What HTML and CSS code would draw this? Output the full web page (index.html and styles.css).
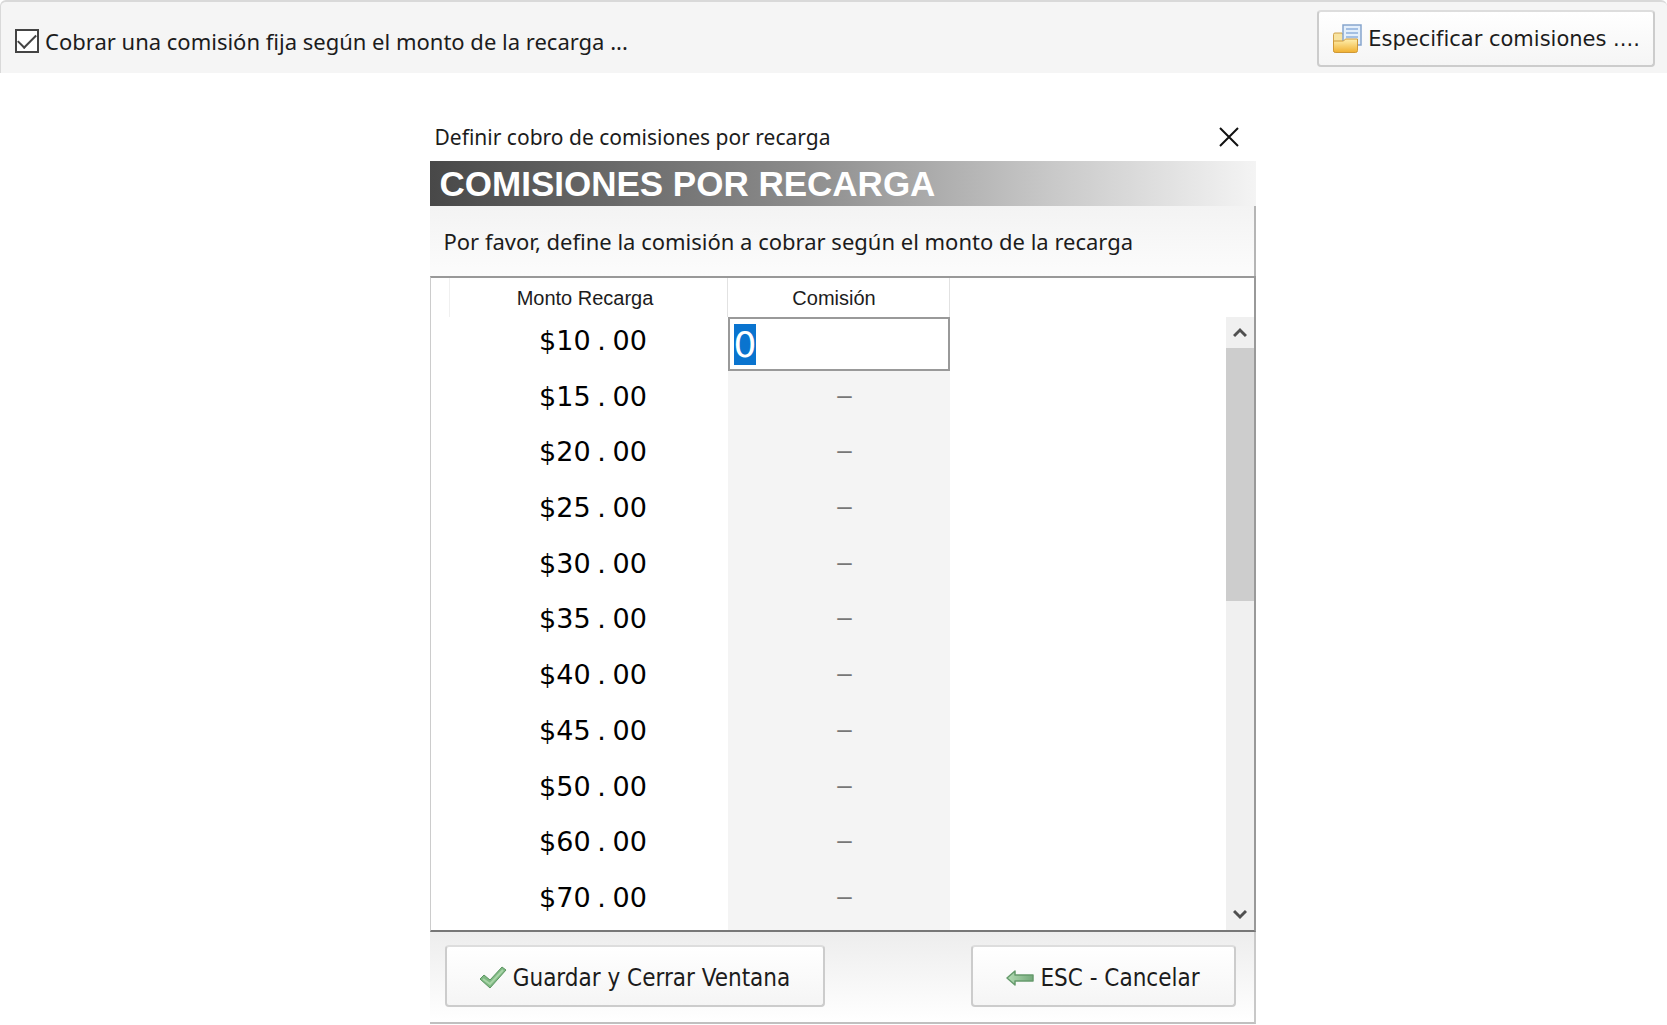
FILE: index.html
```html
<!DOCTYPE html>
<html lang="es">
<head>
<meta charset="utf-8">
<title>Comisiones por recarga</title>
<link rel="stylesheet" href="styles.css">
</head>
<body>
<header class="options">
  <label class="option">
    <input class="check" type="checkbox" checked>
    <span>Cobrar una comisión fija según el monto de la recarga ...</span>
  </label>
  <button class="button button-specify" type="button">
    <svg class="icon-folder" width="30" height="30" viewBox="0 0 30 30" aria-hidden="true">
      <defs>
        <linearGradient id="folder" x1="0" y1="0" x2="0" y2="1"><stop offset="0" stop-color="#fff0b0"/><stop offset="1" stop-color="#f0b030"/></linearGradient>
      </defs>
      <path d="M1.500 10.500q0-1.500 1.500-1.500h7l2 3h11v16H3q-1.500 0-1.500-1.500z" fill="#f8e3a0" stroke="#cfa24a"/>
      <path d="M11 1h18v20H11z" fill="#e4effb" stroke="#86a5cd" stroke-width="1.500"/>
      <path d="M14 5h12M14 9h12M14 13h12" stroke="#8db0dc" stroke-width="1.500"/>
      <path d="M1.500 17h10l2-2h12v11.500q0 2-2 2H3.500q-2 0-2-2z" fill="url(#folder)" stroke="#cf9836"/>
    </svg>
    Especificar comisiones ....
  </button>
</header>
<main class="stage">
  <section class="dialog" role="dialog" aria-labelledby="dialog-title">
    <div class="titlebar">
      <span id="dialog-title">Definir cobro de comisiones por recarga</span>
      <button class="close" type="button" aria-label="Cerrar">
        <svg width="20" height="20" viewBox="0 0 20 20" aria-hidden="true"><path d="M1 1l18 18M19 1L1 19" stroke="#111" stroke-width="2"/></svg>
      </button>
    </div>
    <h1 class="banner">COMISIONES POR RECARGA</h1>
    <p class="intro">Por favor, define la comisión a cobrar según el monto de la recarga</p>
    <div class="list">
      <table class="rates">
        <thead><tr><th scope="col" class="col-amount">Monto Recarga</th><th scope="col" class="col-fee">Comisión</th></tr></thead>
        <tbody>
          <tr><td class="amount">$10<span class="point">.</span>00</td><td class="editing"><input class="fee-input" type="text" value="0" aria-label="Comisión para $10.00"></td></tr>
          <tr><td class="amount">$15<span class="point">.</span>00</td><td class="fee">–</td></tr>
          <tr><td class="amount">$20<span class="point">.</span>00</td><td class="fee">–</td></tr>
          <tr><td class="amount">$25<span class="point">.</span>00</td><td class="fee">–</td></tr>
          <tr><td class="amount">$30<span class="point">.</span>00</td><td class="fee">–</td></tr>
          <tr><td class="amount">$35<span class="point">.</span>00</td><td class="fee">–</td></tr>
          <tr><td class="amount">$40<span class="point">.</span>00</td><td class="fee">–</td></tr>
          <tr><td class="amount">$45<span class="point">.</span>00</td><td class="fee">–</td></tr>
          <tr><td class="amount">$50<span class="point">.</span>00</td><td class="fee">–</td></tr>
          <tr><td class="amount">$60<span class="point">.</span>00</td><td class="fee">–</td></tr>
          <tr><td class="amount">$70<span class="point">.</span>00</td><td class="fee">–</td></tr>
        </tbody>
      </table>
      <div class="scrollbar" aria-hidden="true">
        <svg class="arrow" width="14" height="11" viewBox="0 0 14 11"><path d="M1 9l6-6 6 6" fill="none" stroke="#505050" stroke-width="3"/></svg>
        <div class="track"><div class="thumb"></div></div>
        <svg class="arrow" width="14" height="11" viewBox="0 0 14 11"><path d="M1 2l6 6 6-6" fill="none" stroke="#505050" stroke-width="3"/></svg>
      </div>
    </div>
    <div class="actions">
      <button class="button button-save" type="button">
        <svg width="28" height="24" viewBox="0 0 28 24" aria-hidden="true"><path d="M1 13l4-4 6 5L23 1l4 3-16 18z" fill="#7fb983" stroke="#5c9562" stroke-linejoin="round"/><path d="M4 13l7 5L24 4" fill="none" stroke="#a9d5a8" stroke-width="2"/></svg>
        Guardar y Cerrar Ventana
      </button>
      <button class="button button-cancel" type="button">
        <svg width="28" height="16" viewBox="0 0 28 16" aria-hidden="true"><defs><linearGradient id="arrow" x1="0" x2="1"><stop offset="0" stop-color="#b4dcb4"/><stop offset="1" stop-color="#74a97b"/></linearGradient></defs><path d="M1 8l8-7v4h18v6H9v4z" fill="url(#arrow)" stroke="#659a6c" stroke-width="1.500" stroke-linejoin="round"/></svg>
        ESC - Cancelar
      </button>
    </div>
  </section>
</main>
<script>
const fee = document.querySelector('.fee-input');
fee.focus();
fee.select();
</script>
</body>
</html>
```
FILE: styles.css
```css
* { box-sizing: border-box; }

body {
  margin: 0;
  background: #fff;
  color: #1c1c1c;
  font: 24px/30px "DejaVu Sans Condensed", "DejaVu Sans", sans-serif;
}

.options {
  display: flex;
  justify-content: space-between;
  align-items: flex-start;
  height: 73px;
  padding: 8px 12px 0 14px;
  background: #f5f5f5;
  border-top: 2px solid #d9d9d9;
  border-left: 1px solid #d9d9d9;
  border-radius: 6px 6px 0 0;
}

.option {
  display: flex;
  align-items: center;
  gap: 6px;
  padding-top: 16px;
  font: 22px/30px "Noto Sans", sans-serif;
}

.check {
  appearance: none;
  width: 24px;
  height: 24px;
  margin: 0;
  border: 2px solid #444;
  background: #fff;
  display: grid;
  place-items: center;
}

.check:checked::before {
  content: "";
  width: 16px;
  height: 8px;
  margin-top: -5px;
  border: solid #444;
  border-width: 0 0 2px 2px;
  rotate: -45deg;
}

.button {
  display: flex;
  align-items: center;
  justify-content: center;
  gap: 6px;
  padding: 3px 0 0;
  border: 2px solid #ccc;
  border-top-color: #ddd;
  border-radius: 4px;
  background: linear-gradient(#fff, #f5f5f5);
  color: #1c1c1c;
  font: 24px/30px "DejaVu Sans Condensed", "DejaVu Sans", sans-serif;
  white-space: nowrap;
}

.button-specify {
  width: 338px;
  height: 57px;
  padding: 0;
  font: 21px/30px "DejaVu Sans", sans-serif;
}

.stage {
  display: flex;
  justify-content: center;
  padding: 39px 0 0 18px;
}

.dialog { width: 826px; }

.titlebar {
  display: flex;
  align-items: center;
  justify-content: space-between;
  height: 49px;
  padding: 0 17px 0 5px;
  font: 21px/30px "Noto Sans", sans-serif;
}

.close {
  display: flex;
  padding: 0;
  border: 0;
  background: none;
}

.banner {
  margin: 0;
  padding: 0 10px;
  background: linear-gradient(90deg, #484848, #8c8c8c 45%, #c8c8c8 75%, #f4f4f4);
  color: #fff;
  font: bold 35px/45px "Liberation Sans", Arial, sans-serif;
}

.intro {
  margin: 0;
  padding: 20px 14px;
  border-right: 2px solid #b5b5b5;
  background: linear-gradient(#f3f3f3, #fcfcfc);
  font: 22px/30px "Noto Sans", sans-serif;
}

.list {
  display: flex;
  justify-content: space-between;
  border: 2px solid #999;
  border-left: 1px solid #ccc;
  border-bottom-color: #777;
}

.rates {
  height: 652px;
  margin-left: 18px;
  border-collapse: separate;
  border-spacing: 0;
}

th {
  height: 39px;
  padding: 0;
  border-right: 1px solid #e2e2e2;
  font: 20px/38px "Liberation Sans", Arial, sans-serif;
}

.col-amount { width: 279px; padding-right: 6px; border-left: 1px solid #f0f0f0; }
.col-fee { width: 222px; padding-right: 8px; }

td { height: 55px; padding: 0; text-align: center; }

.amount {
  padding: 0 0 8px 10px;
  color: #000;
  font: 27px/38px "DejaVu Sans", sans-serif;
}

.point { display: inline-block; width: 22px; }

.fee {
  padding: 0 0 12px 12px;
  background: #f4f4f4;
  color: #777;
  font: 26px/38px "Liberation Sans", Arial, sans-serif;
}

.editing { vertical-align: top; background: #f4f4f4; }

.fee-input {
  display: block;
  width: 100%;
  height: 54px;
  padding: 0 4px;
  border: 2px solid #999;
  outline: 0;
  background: #fff;
  font: 36px "DejaVu Sans", sans-serif;
}

.fee-input::selection { background: #0a74cf; color: #fff; }

.scrollbar {
  display: flex;
  flex-direction: column;
  align-items: center;
  width: 28px;
  margin-top: 39px;
  background: #f0f0f0;
}

.arrow { margin: 10px 0; }

.track { flex: 1; align-self: stretch; }

.thumb { height: 46%; background: #cdcdcd; }

.actions {
  display: flex;
  justify-content: space-between;
  padding: 13px 18px 15px 15px;
  border-right: 2px solid #c8c8c8;
  border-bottom: 2px solid #c0c0c0;
  background: linear-gradient(#ededed, #fff);
}

.button-save { width: 380px; height: 62px; }
.button-cancel { width: 265px; height: 62px; }
```
